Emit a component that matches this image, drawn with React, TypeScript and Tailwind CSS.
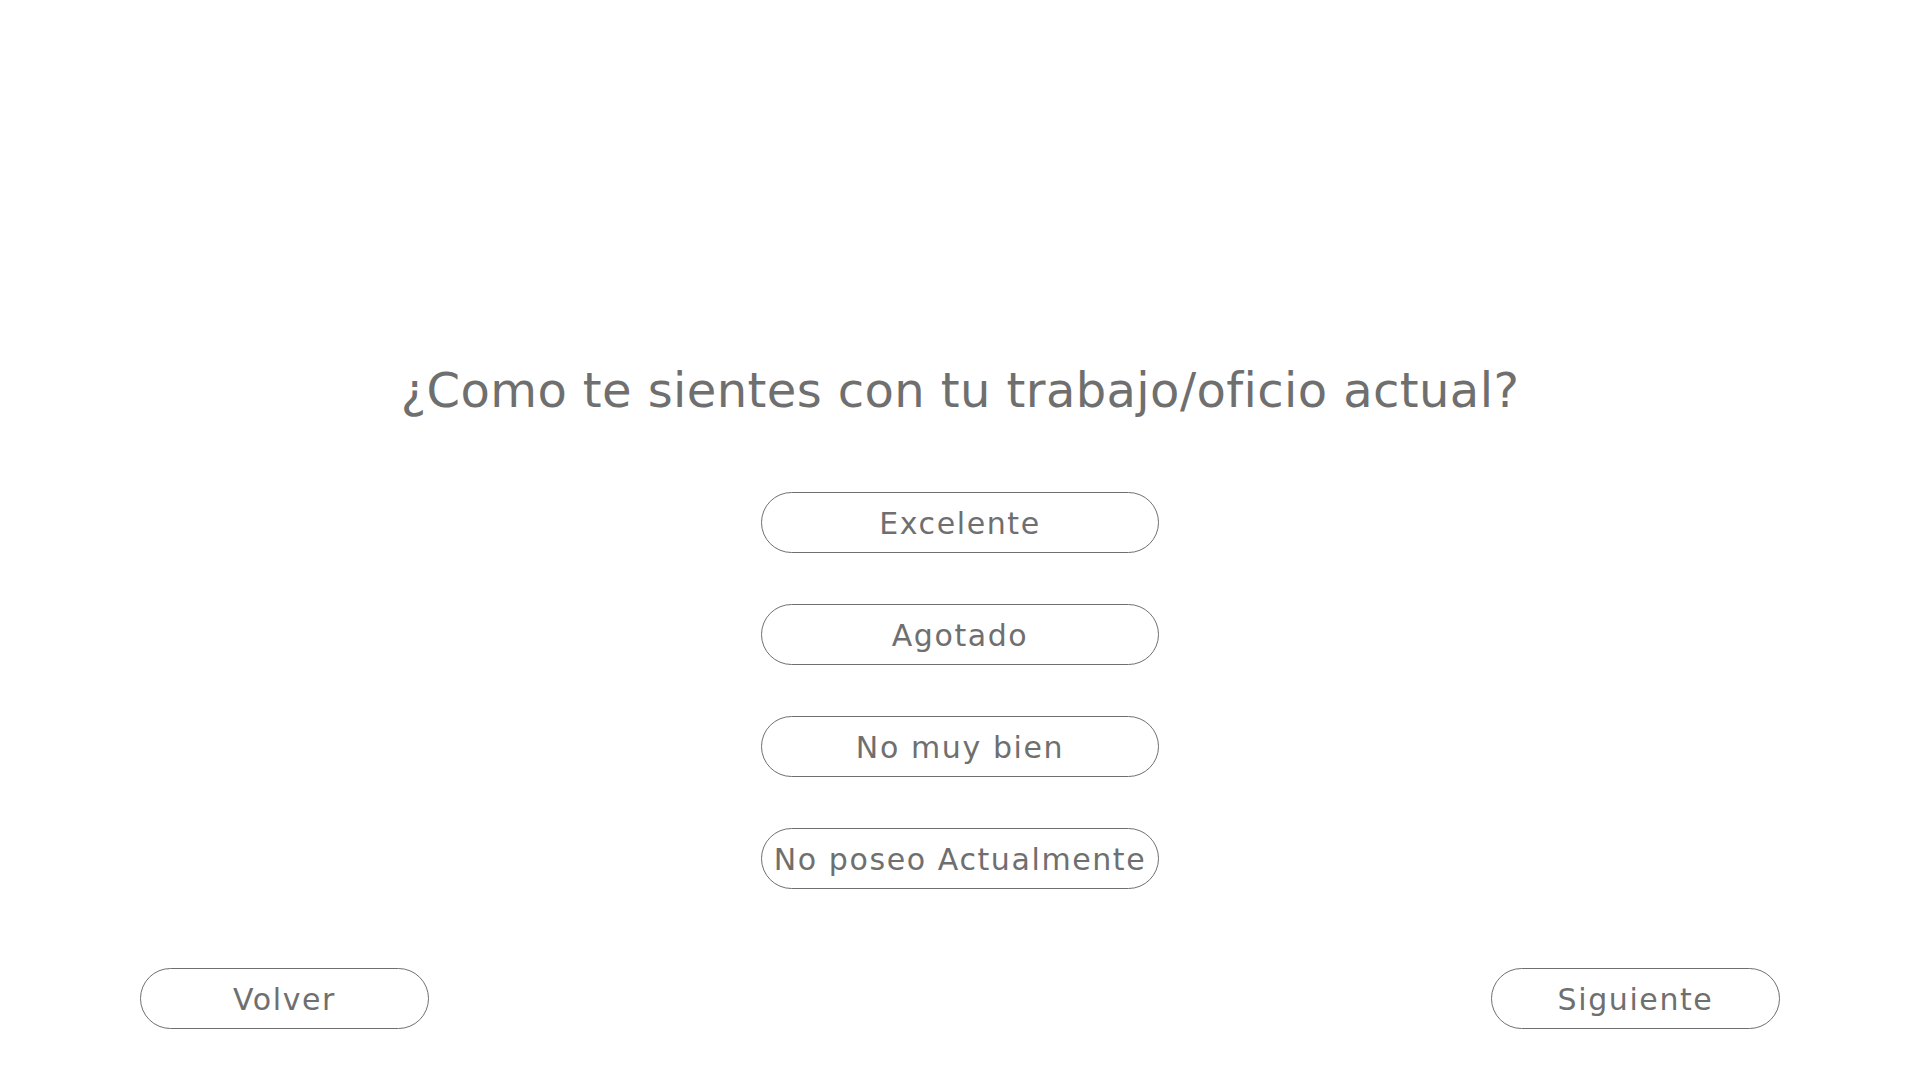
const options = ["Excelente", "Agotado", "No muy bien", "No poseo Actualmente"];

function PillButton({ label, className = "" }: { label: string; className?: string }) {
  return (
    <button
      type="button"
      className={`flex h-[61px] items-center justify-center rounded-full border border-[#707070] bg-white pt-[2px] text-[30px] tracking-[1.6px] text-[#6f6f6f] ${className}`}
    >
      {label}
    </button>
  );
}

export default function App() {
  return (
    <div
      className="flex h-[1080px] w-[1920px] flex-col items-center bg-white"
      style={{ fontFamily: '"DejaVu Sans", "Open Sans", sans-serif' }}
    >
      <h1 className="mt-[361px] text-[48px] leading-[58px] font-normal tracking-[0.4px] text-[#6f6f6f]">
        ¿Como te sientes con tu trabajo/oficio actual?
      </h1>
      <div className="mt-[73px] flex flex-col gap-[51px]">
        {options.map((o) => (
          <PillButton key={o} label={o} className="w-[398px]" />
        ))}
      </div>
      <div className="mt-[79px] flex w-full justify-between px-[140px]">
        <PillButton label="Volver" className="w-[289px]" />
        <PillButton label="Siguiente" className="w-[289px]" />
      </div>
    </div>
  );
}
